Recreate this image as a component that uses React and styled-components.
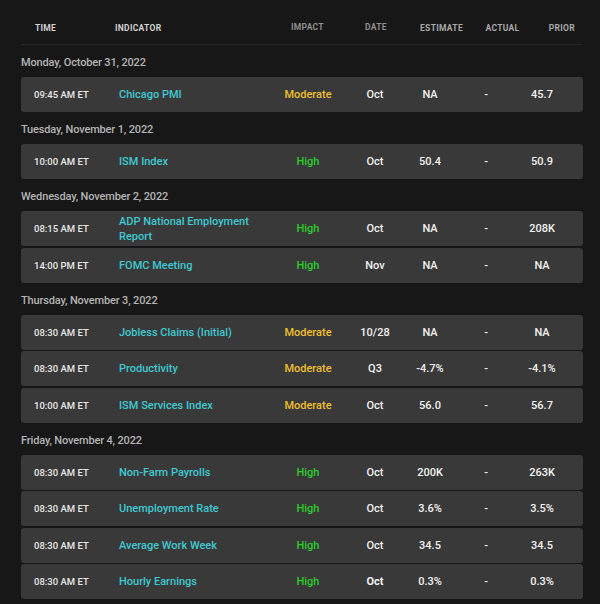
import React from 'react';
import styled, { createGlobalStyle } from 'styled-components';

const GlobalStyle = createGlobalStyle`
  html, body {
    margin: 0;
    padding: 0;
    background: #171717;
  }
  body {
    font-family: Roboto, 'Liberation Sans', sans-serif;
    -webkit-font-smoothing: antialiased;
  }
`;

const Page = styled.div`
  width: 600px;
  height: 604px;
  overflow: hidden;
  padding: 0 17px 0 21px;
  box-sizing: border-box;
  background: #171717;
`;

const Header = styled.div`
  display: grid;
  grid-template-columns: 80px 162px 61px 76px 55px 67px 1fr;
  align-items: center;
  padding: 23px 0 10px 14px;
  border-bottom: 1px solid #262626;
  height: 11px;
  box-sizing: content-box;
`;

const Th = styled.div`
  font-size: 8.5px;
  font-weight: 700;
  letter-spacing: 0.3px;
  text-transform: uppercase;
  line-height: 11px;
  color: ${p => p.tone === 'light' ? '#d2d2d2' : p.tone === 'dim' ? '#8f8f8f' : '#a9a9a9'};
  text-align: ${p => p.align || 'center'};
  padding-right: ${p => p.pr || 0}px;
  transform: translateY(${p => p.up ? -1 : 0}px);
`;

const Day = styled.div`
  padding: 11px 0 7px 0;
  font-size: 11px;
  letter-spacing: -0.15px;
  line-height: 14px;
  font-weight: 500;
  color: #b4b4b4;
`;

const Rows = styled.div`
  display: flex;
  flex-direction: column;
  gap: 1.5px;
`;

const Row = styled.div`
  display: grid;
  grid-template-columns: 85px 149px 80px 54px 56px 56px 56px;
  align-items: center;
  height: 35px;
  padding: 0 13px;
  background: #393939;
  border-radius: 3px;
`;

const Time = styled.div`
  font-size: 9.5px;
  font-weight: 500;
  color: #e8e8e8;
`;

const Indicator = styled.div`
  font-size: 11px;
  font-weight: 500;
  line-height: 15px;
  color: #3fc9d2;
`;

const Impact = styled.div`
  text-align: center;
  font-size: 11px;
  font-weight: 500;
  color: ${p => p.level === 'High' ? '#2bcb2b' : '#f0c02c'};
`;

const Cell = styled.div`
  text-align: center;
  font-size: 11px;
  font-weight: ${p => p.bold ? 700 : 500};
  color: #f2f2f2;
`;

const days = [
  {
    label: 'Monday, October 31, 2022',
    events: [
      ['09:45 AM ET', 'Chicago PMI', 'Moderate', 'Oct', 'NA', '-', '45.7'],
    ],
  },
  {
    label: 'Tuesday, November 1, 2022',
    events: [
      ['10:00 AM ET', 'ISM Index', 'High', 'Oct', '50.4', '-', '50.9'],
    ],
  },
  {
    label: 'Wednesday, November 2, 2022',
    events: [
      ['08:15 AM ET', 'ADP National Employment Report', 'High', 'Oct', 'NA', '-', '208K'],
      ['14:00 PM ET', 'FOMC Meeting', 'High', 'Nov', 'NA', '-', 'NA'],
    ],
  },
  {
    label: 'Thursday, November 3, 2022',
    events: [
      ['08:30 AM ET', 'Jobless Claims (Initial)', 'Moderate', '10/28', 'NA', '-', 'NA'],
      ['08:30 AM ET', 'Productivity', 'Moderate', 'Q3', '-4.7%', '-', '-4.1%'],
      ['10:00 AM ET', 'ISM Services Index', 'Moderate', 'Oct', '56.0', '-', '56.7'],
    ],
  },
  {
    label: 'Friday, November 4, 2022',
    events: [
      ['08:30 AM ET', 'Non-Farm Payrolls', 'High', 'Oct', '200K', '-', '263K'],
      ['08:30 AM ET', 'Unemployment Rate', 'High', 'Oct', '3.6%', '-', '3.5%'],
      ['08:30 AM ET', 'Average Work Week', 'High', 'Oct', '34.5', '-', '34.5'],
      ['08:30 AM ET', 'Hourly Earnings', 'High', 'Oct', '0.3%', '-', '0.3%', true],
    ],
  },
];

const App = () => {
  return (
    <Page>
      <GlobalStyle />
      <Header>
        <Th tone="light" align="left">Time</Th>
        <Th tone="light" align="left">Indicator</Th>
        <Th tone="dim" up>Impact</Th>
        <Th tone="dim" up>Date</Th>
        <Th>Estimate</Th>
        <Th>Actual</Th>
        <Th align="right" pr={8}>Prior</Th>
      </Header>
      {days.map(day => (
        <div key={day.label}>
          <Day>{day.label}</Day>
          <Rows>
            {day.events.map((e, i) => (
              <Row key={i}>
                <Time>{e[0]}</Time>
                <Indicator>{e[1]}</Indicator>
                <Impact level={e[2]}>{e[2]}</Impact>
                <Cell bold={e[7]}>{e[3]}</Cell>
                <Cell>{e[4]}</Cell>
                <Cell>{e[5]}</Cell>
                <Cell>{e[6]}</Cell>
              </Row>
            ))}
          </Rows>
        </div>
      ))}
    </Page>
  );
};

export default App;
